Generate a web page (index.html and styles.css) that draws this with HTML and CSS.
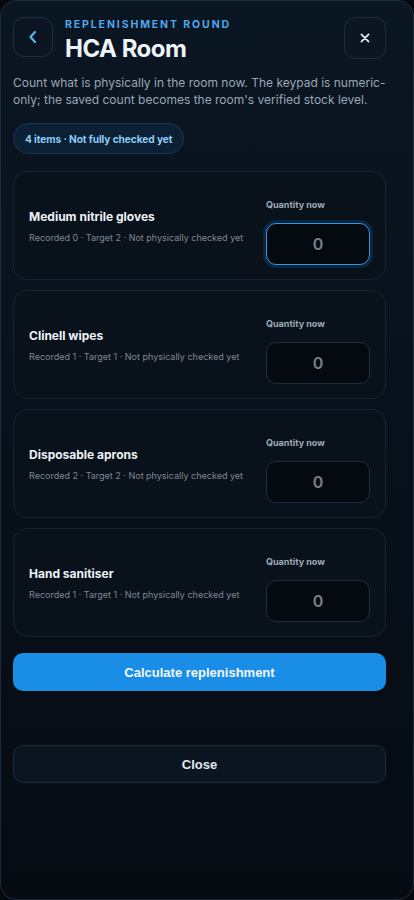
FILE: index.html
```html
<!DOCTYPE html>
<html lang="en">
<head>
<meta charset="utf-8">
<title>HCA Room</title>
<link rel="stylesheet" href="styles.css">
</head>
<body>
<div class="panel">
  <header class="head">
    <button class="icon-btn back" aria-label="Back">
      <svg width="12" height="14" viewBox="0 0 12 14"><path d="M8 2 L3.5 7 L8 12" fill="none" stroke="#5fb2f0" stroke-width="2.2" stroke-linecap="round" stroke-linejoin="round"/></svg>
    </button>
    <div class="titles">
      <div class="eyebrow">REPLENISHMENT ROUND</div>
      <h1 class="title">HCA Room</h1>
    </div>
    <button class="icon-btn close-x" aria-label="Close">
      <svg width="12" height="12" viewBox="0 0 12 12"><path d="M2.4 2.4 L9.6 9.6 M9.6 2.4 L2.4 9.6" fill="none" stroke="#e6edf5" stroke-width="1.7" stroke-linecap="round"/></svg>
    </button>
  </header>
  <p class="desc">Count what is physically in the room now. The keypad is numeric-only; the saved count becomes the room's verified stock level.</p>
  <div class="badge">4 items · Not fully checked yet</div>

  <div class="cards">
    <div class="card">
      <div class="info">
        <div class="name">Medium nitrile gloves</div>
        <div class="meta">Recorded 0 · Target 2 · Not physically checked yet</div>
      </div>
      <div class="qty">
        <div class="qlabel">Quantity now</div>
        <div class="qinput focused">0</div>
      </div>
    </div>
    <div class="card">
      <div class="info">
        <div class="name">Clinell wipes</div>
        <div class="meta">Recorded 1 · Target 1 · Not physically checked yet</div>
      </div>
      <div class="qty">
        <div class="qlabel">Quantity now</div>
        <div class="qinput">0</div>
      </div>
    </div>
    <div class="card">
      <div class="info">
        <div class="name">Disposable aprons</div>
        <div class="meta">Recorded 2 · Target 2 · Not physically checked yet</div>
      </div>
      <div class="qty">
        <div class="qlabel">Quantity now</div>
        <div class="qinput">0</div>
      </div>
    </div>
    <div class="card">
      <div class="info">
        <div class="name">Hand sanitiser</div>
        <div class="meta">Recorded 1 · Target 1 · Not physically checked yet</div>
      </div>
      <div class="qty">
        <div class="qlabel">Quantity now</div>
        <div class="qinput">0</div>
      </div>
    </div>
  </div>

  <button class="btn primary">Calculate replenishment</button>
  <button class="btn secondary">Close</button>
</div>
</body>
</html>
```

FILE: styles.css
```css
* { box-sizing: border-box; }
html, body { margin: 0; padding: 0; background: #05080d; }
body {
  font-family: Inter, "Noto Sans", sans-serif;
  width: 414px;
  height: 900px;
  overflow: hidden;
}
.panel {
  width: 414px;
  height: 900px;
  border: 1px solid #1d2b3b;
  border-radius: 16px;
  background: linear-gradient(180deg, #0b1623 0%, #08111b 45%, #060b12 100%);
  padding: 16px 27px 0 12px;
  display: flex;
  flex-direction: column;
}
.head {
  display: flex;
  align-items: flex-start;
  gap: 12px;
}
.icon-btn {
  width: 40px;
  height: 40px;
  border-radius: 11px;
  border: 1px solid #1f2f42;
  background: #0b1522;
  display: flex;
  align-items: center;
  justify-content: center;
  padding: 0;
  flex: none;
}
.close-x {
  width: 42px;
  height: 42px;
  margin-left: auto;
  background: #0c1622;
  border-color: #1f2b39;
}
.titles { padding-top: 1px; }
.eyebrow {
  font-size: 10.5px;
  font-weight: 700;
  letter-spacing: 1.9px;
  color: #4fa8ea;
  line-height: 14px;
}
.title {
  margin: 2px 0 0;
  font-size: 24px;
  font-weight: 700;
  letter-spacing: -0.5px;
  color: #eef3f8;
  line-height: 30px;
}
.desc {
  margin: 10px 0 0;
  font-size: 12px;
  line-height: 17px;
  color: #9aa7b6;
}
.badge {
  align-self: flex-start;
  margin-top: 15px;
  height: 31px;
  padding: 0 11px;
  border-radius: 16px;
  border: 1px solid #1b3854;
  background: #0b2034;
  color: #8ccaf5;
  font-size: 10.2px;
  font-weight: 700;
  display: flex;
  align-items: center;
  letter-spacing: -0.1px;
}
.cards {
  margin-top: 17px;
  display: flex;
  flex-direction: column;
  gap: 10px;
}
.card {
  height: 109px;
  border: 1px solid #18232f;
  border-radius: 14px;
  background: #09111a;
  padding: 0 15px;
  display: flex;
  gap: 12px;
}
.info {
  align-self: center;
  flex: 1;
  min-width: 0;
  padding-top: 2px;
}
.name {
  font-size: 12px;
  font-weight: 700;
  color: #eef3f8;
  line-height: 15px;
}
.meta {
  margin-top: 8px;
  font-size: 9px;
  color: #7c8998;
  line-height: 12px;
  white-space: nowrap;
}
.qty {
  align-self: flex-end;
  margin-bottom: 14px;
  width: 104px;
  flex: none;
}
.qlabel {
  font-size: 9px;
  font-weight: 700;
  color: #9eabb9;
  line-height: 12px;
}
.qinput {
  margin-top: 12px;
  height: 42px;
  border-radius: 10px;
  border: 1px solid #1f2e3e;
  background: #050a10;
  color: #7a8088;
  font-size: 16px;
  font-weight: 600;
  display: flex;
  align-items: center;
  justify-content: center;
}
.qinput.focused {
  border: 1.5px solid #2f95e6;
  box-shadow: 0 0 0 3px rgba(30, 110, 190, 0.22);
}
.btn {
  font-family: "Liberation Sans", Arial, sans-serif;
  font-size: 13px;
  font-weight: 700;
  height: 38px;
  border-radius: 10px;
  width: 100%;
  flex: none;
}
.primary {
  margin-top: 16px;
  background: #1a8ee7;
  border: none;
  color: #f2f8fd;
}
.secondary {
  margin-top: 54px;
  background: #0b1521;
  border: 1px solid #1f2b39;
  color: #e2e8ef;
}
```
